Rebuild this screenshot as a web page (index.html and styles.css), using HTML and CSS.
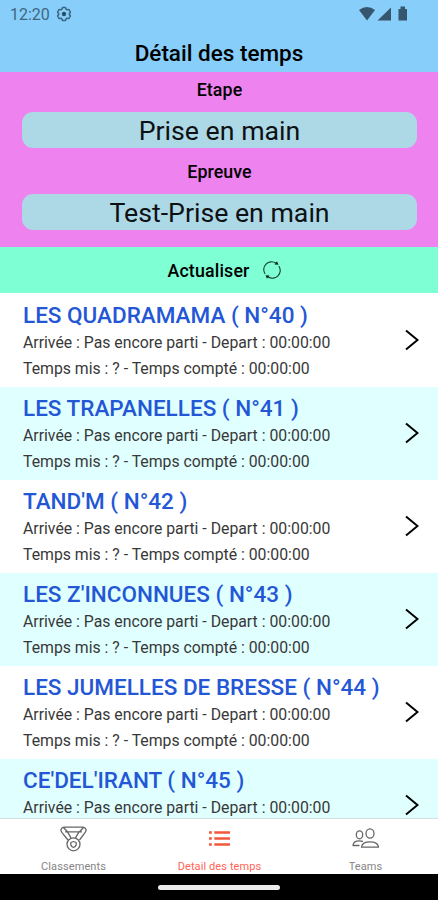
FILE: index.html
```html
<!DOCTYPE html>
<html lang="fr">
<head>
    <meta charset="UTF-8">
    <meta name="viewport" content="width=device-width, initial-scale=1.0">
    <title>Détail des temps</title>
    <link rel="stylesheet" href="styles.css">
</head>
<body>
    <header class="header">
        <div class="status-bar">
            <span class="clock">12:20</span>
            <svg class="gear" viewBox="0 0 16 16" width="16" height="16">
                <path d="M6.500 1.500h3l.6 1.700 1 .6 1.900-.3 1.400 2.500L13.200 8l1.200 2-1.400 2.500-1.900-.3-1 .6-.6 1.700h-3l-.6-1.700-1-.6-1.900.3L1.600 10l1.200-2-1.200-2L3 3.500l1.900.3 1-.6z" fill="none" stroke="#3d6480" stroke-width="1.500" stroke-linejoin="round"/>
                <circle cx="8" cy="8" r="2.200" fill="#2c4f68"/>
            </svg>
            <svg class="signals" viewBox="0 0 50 16" width="50" height="16">
                <path d="M0 4Q8-2 16 4L8 14.500z"/>
                <path d="M32 1.500v13H18.500z"/>
                <path d="M39.500 3h2V0.500h4.500V3H48v11.500H39.500z"/>
            </svg>
        </div>
        <h1>Détail des temps</h1>
    </header>

    <section class="filters">
        <p class="label">Etape</p>
        <div class="select">Prise en main</div>
        <p class="label">Epreuve</p>
        <div class="select">Test-Prise en main</div>
    </section>

    <div class="refresh">
        <span>Actualiser</span>
        <svg viewBox="0 0 18 18" width="18" height="18">
            <path d="M2.200 13A7.700 7.700 0 0 1 13 2.300M15.800 5A7.700 7.700 0 0 1 5 15.700" fill="none" stroke="#163c30" stroke-width="1.100"/>
            <path d="M11.500 3.500L15.500 3.800 14 0.300zM6.500 14.500L2.500 14.200 4 17.700z" fill="#0c241c"/>
        </svg>
    </div>

    <main class="list">
        <div class="row">
            <div>
                <h2>LES QUADRAMAMA ( N°40 )</h2>
                <p>Arrivée : Pas encore parti - Depart : 00:00:00</p>
                <p>Temps mis : ? - Temps compté : 00:00:00</p>
            </div>
            <svg class="chevron" viewBox="0 0 14 22" width="14" height="22"><path d="M1 1.500L12.500 11 1 20.500"/></svg>
        </div>
        <div class="row">
            <div>
                <h2>LES TRAPANELLES ( N°41 )</h2>
                <p>Arrivée : Pas encore parti - Depart : 00:00:00</p>
                <p>Temps mis : ? - Temps compté : 00:00:00</p>
            </div>
            <svg class="chevron" viewBox="0 0 14 22" width="14" height="22"><path d="M1 1.500L12.500 11 1 20.500"/></svg>
        </div>
        <div class="row">
            <div>
                <h2>TAND'M ( N°42 )</h2>
                <p>Arrivée : Pas encore parti - Depart : 00:00:00</p>
                <p>Temps mis : ? - Temps compté : 00:00:00</p>
            </div>
            <svg class="chevron" viewBox="0 0 14 22" width="14" height="22"><path d="M1 1.500L12.500 11 1 20.500"/></svg>
        </div>
        <div class="row">
            <div>
                <h2>LES Z'INCONNUES ( N°43 )</h2>
                <p>Arrivée : Pas encore parti - Depart : 00:00:00</p>
                <p>Temps mis : ? - Temps compté : 00:00:00</p>
            </div>
            <svg class="chevron" viewBox="0 0 14 22" width="14" height="22"><path d="M1 1.500L12.500 11 1 20.500"/></svg>
        </div>
        <div class="row">
            <div>
                <h2>LES JUMELLES DE BRESSE ( N°44 )</h2>
                <p>Arrivée : Pas encore parti - Depart : 00:00:00</p>
                <p>Temps mis : ? - Temps compté : 00:00:00</p>
            </div>
            <svg class="chevron" viewBox="0 0 14 22" width="14" height="22"><path d="M1 1.500L12.500 11 1 20.500"/></svg>
        </div>
        <div class="row">
            <div>
                <h2>CE'DEL'IRANT ( N°45 )</h2>
                <p>Arrivée : Pas encore parti - Depart : 00:00:00</p>
            </div>
            <svg class="chevron" viewBox="0 0 14 22" width="14" height="22"><path d="M1 1.500L12.500 11 1 20.500"/></svg>
        </div>
    </main>

    <nav class="tabs">
        <div class="tab">
            <svg viewBox="0 0 28 28" width="28" height="28" fill="none" stroke="#666" stroke-width="1.300" stroke-linejoin="round">
                <path d="M5 2.200h19q2.200 0 3 2.300c.3 1-.2 2-.8 2.800L20.500 15M5 2.200q-2.200 0-3 2.300c-.3 1 .2 2 .8 2.800L9 15M6 6.800h17M8.500 6.800l3.500 6M20 6.800l-3.500 6M4.500 2.500l4 4.300M24.500 2.500l-4 4.300"/>
                <circle cx="14.500" cy="19.300" r="6.500"/>
                <path d="M11.800 17.500l2.700-1 2.700 1v2.500q-.7 1.700-2.700 2.500-2-.8-2.700-2.500z"/>
            </svg>
            <span>Classements</span>
        </div>
        <div class="tab active">
            <svg viewBox="0 0 28 28" width="28" height="28" fill="none" stroke="#f2583b" stroke-width="2.600">
                <path d="M9.300 7.500H25M9.300 13.500H25M9.300 19.500H25M4 7.500h2.800M4 13.500h2.800M4 19.500h2.800"/>
            </svg>
            <span>Detail des temps</span>
        </div>
        <div class="tab">
            <svg viewBox="0 0 28 28" width="28" height="28" fill="none" stroke="#666" stroke-width="1.300" stroke-linejoin="round" stroke-linecap="round">
                <ellipse cx="19" cy="8.500" rx="4" ry="4.600"/>
                <path d="M10.500 22.200c.3-3.500 4-5.300 8.500-5.300s8.200 1.800 8.500 5.300z"/>
                <ellipse cx="8.500" cy="9.800" rx="3.200" ry="4"/>
                <path d="M8 20.500H2c.2-3 3-4.700 6.500-4.700 1.200 0 2.200.2 3 .6"/>
            </svg>
            <span>Teams</span>
        </div>
    </nav>

    <footer class="nav-bar">
        <div class="handle"></div>
    </footer>
</body>
</html>
```
FILE: styles.css
```css
* {
    box-sizing: border-box;
}
body {
    margin: 0;
    height: 900px;
    display: flex;
    flex-direction: column;
    overflow: hidden;
    background-color: white;
    font-family: Roboto, sans-serif;
    color: black;
}
h1, h2, p {
    margin: 0;
    white-space: nowrap;
}
.header {
    height: 72px;
    flex-shrink: 0;
    background-color: lightskyblue;
}
.status-bar {
    display: flex;
    align-items: center;
    height: 28px;
    padding: 0 29px 0 10px;
}
.clock {
    font-size: 16px;
    line-height: 28px;
    padding-top: 1px;
    color: #41667f;
    width: 39px;
    margin-right: 7px;
}
.signals {
    margin-left: auto;
    fill: #35566e;
}
h1 {
    font-size: 22.5px;
    font-weight: 500;
    line-height: 26px;
    padding-top: 12px;
    text-align: center;
}
.filters {
    height: 175px;
    flex-shrink: 0;
    padding: 0 21px 0 22px;
    background-color: violet;
    text-align: center;
}
.label {
    height: 40px;
    line-height: 35px;
    font-size: 17.8px;
    font-weight: 500;
    letter-spacing: 0.1px;
}
.select {
    height: 36px;
    margin-bottom: 6px;
    border-radius: 11px;
    background-color: lightblue;
    font-size: 26.7px;
    line-height: 38px;
    color: #0d1113;
}
.refresh {
    display: flex;
    justify-content: center;
    align-items: center;
    gap: 13px;
    height: 46px;
    flex-shrink: 0;
    padding-left: 10px;
    background-color: aquamarine;
    font-size: 17.8px;
    font-weight: 500;
    letter-spacing: 0.15px;
}
.list {
    height: 526px;
    flex-shrink: 0;
    overflow: hidden;
    padding-top: 1px;
    border-bottom: 1px solid #d5dede;
}
.row {
    display: flex;
    justify-content: space-between;
    align-items: flex-start;
    height: 93px;
    padding: 8px 19px 0 23px;
}
.row:nth-child(even) {
    background-color: lightcyan;
}
h2 {
    font-size: 22.5px;
    font-weight: 500;
    line-height: 26px;
    padding-bottom: 2px;
    color: #2457d6;
}
.row p {
    font-size: 15.8px;
    line-height: 26px;
    color: #383838;
}
.chevron {
    margin-top: 27px;
    fill: none;
    stroke: black;
    stroke-width: 2;
}
.tabs {
    display: flex;
    height: 55px;
    flex-shrink: 0;
    background-color: white;
}
.tab {
    display: flex;
    flex: 1;
    flex-direction: column;
    align-items: center;
    padding-top: 6px;
    font-size: 11px;
    line-height: 13px;
    letter-spacing: 0.1px;
    color: #858585;
}
.tab span {
    margin-top: 7px;
    padding-left: 1px;
}
.tab.active {
    color: #ff6355;
}
.nav-bar {
    display: flex;
    justify-content: center;
    height: 26px;
    padding-top: 11px;
    background-color: black;
}
.handle {
    width: 122px;
    height: 5px;
    border-radius: 3px;
    background-color: #ebebeb;
}
```
